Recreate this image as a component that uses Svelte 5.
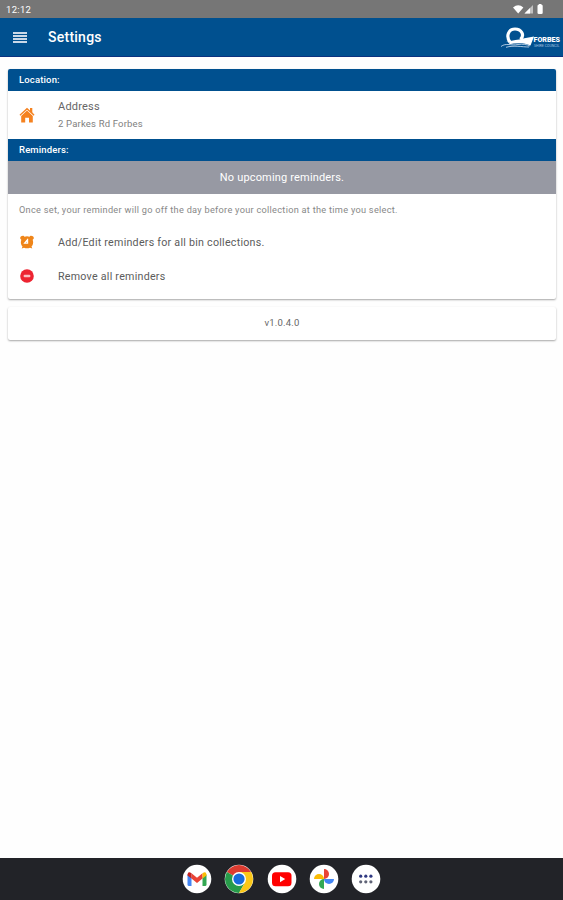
<script>
  const address = "2 Parkes Rd Forbes";
  const version = "v1.0.4.0";
  const apps = ["gmail", "chrome", "youtube", "photos", "drawer"];
</script>

<div class="screen">
  <div class="status-bar">
    <span class="clock">12:12</span>
    <svg class="status-icons" width="34" height="12" viewBox="0 0 34 12" aria-hidden="true">
      <path d="M0 4.6Q5.2 -0.2 10.4 4.6L5.2 10.5Z" fill="#fff" />
      <path d="M11.5 10.5L20 2V10.5Z" fill="#fff" opacity="0.55" />
      <path d="M11.5 10.5L17 5V10.5Z" fill="#fff" />
      <rect x="24.5" y="1.8" width="5.2" height="9.2" rx="1.3" fill="#fff" />
      <rect x="25.8" y="1" width="2.6" height="2" fill="#fff" />
    </svg>
  </div>

  <header class="app-bar">
    <button class="menu" type="button" aria-label="Menu">
      <span></span><span></span><span></span><span></span>
    </button>
    <h1>Settings</h1>
    <div class="logo">
      <svg width="63" height="30" viewBox="0 -3 63 30" aria-hidden="true">
        <path d="M10 17C5.5 11 8.7 4 15 4S25 10 20.5 14.5" fill="none" stroke="#fff" stroke-width="3.2" />
        <path d="M6 17C12 15 17 15.5 23 13.5L34 11.5L30.5 20.5C24 17.5 16 18 8 19.5C11 17.5 9 17 6 17Z" fill="#fff" />
        <path d="M1 21.5C6 17.5 11 21 18 19.5C23 18.8 27 19.5 30 21M6 22.3C14 20 22 22 29 22" fill="none" stroke="#d5e5f5" stroke-width="0.8" />
        <text x="33.5" y="16.5" class="logo-name" textLength="26.5" lengthAdjust="spacingAndGlyphs">FORBES</text>
        <text x="34" y="21.8" class="logo-sub" textLength="25.5" lengthAdjust="spacingAndGlyphs">SHIRE COUNCIL</text>
      </svg>
    </div>
  </header>

  <main>
    <section class="card">
      <h2>Location:</h2>
      <div class="row row-address">
        <svg width="16" height="16" viewBox="0 0 16 16" aria-hidden="true">
          <path d="M8 0.8L11 3.5V1H13.3V5.3L15.5 7.8L14.7 8.8L8 2.8L1.3 8.8L0.5 7.8Z" fill="#f58220" />
          <path d="M8 3.6L13.8 9V15.5H10V10.7H6.2V15.5H2.2V9Z" fill="#f58220" />
        </svg>
        <div class="address">
          <p class="label">Address</p>
          <p class="value">{address}</p>
        </div>
      </div>

      <h2>Reminders:</h2>
      <p class="banner">No upcoming reminders.</p>
      <p class="hint">Once set, your reminder will go off the day before your collection at the time you select.</p>
      <div class="row">
        <svg width="16" height="16" viewBox="0 0 16 16" aria-hidden="true">
          <path d="M1.2 4.5Q1 1.5 4.5 1.7L5.5 2.7Q8 1.7 10.5 2.7L11.5 1.7Q15 1.5 14.8 4.5L13.7 5.7Q15 10 12.5 12.5L13.3 14.6L11 13.7Q8 15 5 13.7L2.7 14.6L3.5 12.5Q1 10 2.3 5.7Z" fill="#ef8519" />
          <path d="M8.6 4.8V9.2H5.6L8.2 6" fill="none" stroke="#fff" stroke-width="1.2" />
        </svg>
        <p class="action action-add">Add/Edit reminders for all bin collections.</p>
      </div>
      <div class="row">
        <svg width="16" height="16" viewBox="0 0 16 16" aria-hidden="true">
          <circle cx="8" cy="8" r="6.8" fill="#ed2431" />
          <rect x="4.6" y="6.8" width="6.8" height="2.5" rx="1" fill="#fff" opacity="0.7" />
        </svg>
        <p class="action action-remove">Remove all reminders</p>
      </div>
    </section>

    <section class="card version">{version}</section>
  </main>

  <nav>
    {#each apps as app}
      <span class="app">
        <svg width="30" height="30" viewBox="0 0 30 30" aria-hidden="true">
          <circle cx="15" cy="15" r="14.3" fill="#fff" />
          {#if app === "gmail"}
            <path d="M5.5 10.5L9.5 13V22H7Q5.5 22 5.5 20.5Z" fill="#4285f4" />
            <path d="M24.5 10.5L20.5 13V22H23Q24.5 22 24.5 20.5Z" fill="#34a853" />
            <path d="M9.5 9.3L15 13.7L20.5 9.3V14.5L15 18.9L9.5 14.5Z" fill="#ea4335" />
            <path d="M5.5 10.5Q6 6.7 9.5 9.2V14.5L5.5 11.6Z" fill="#c5221f" />
            <path d="M24.5 10.5Q24 6.7 20.5 9.2V14.5L24.5 11.6Z" fill="#fbbc04" />
          {:else if app === "chrome"}
            <path d="M15 15L2.9 8A14 14 0 0 1 27.1 8Z" fill="#dc3b30" />
            <path d="M15 15L2.9 8A14 14 0 0 0 15 29L21 18.5Z" fill="#279b4a" />
            <path d="M15 8H27.1A14 14 0 0 1 15 29L21 18.5Z" fill="#fbc718" />
            <circle cx="15" cy="15" r="7" fill="#fff" />
            <circle cx="15" cy="15" r="5.6" fill="#176bdc" />
          {:else if app === "youtube"}
            <rect x="5" y="8.2" width="19.5" height="14" rx="3.5" fill="#f00" />
            <path d="M13 12L18.2 15.1L13 18.2Z" fill="#fff" />
          {:else if app === "photos"}
            <path d="M15 5A5 5 0 0 1 15 15Z" fill="#ea4335" />
            <path d="M25 15A5 5 0 0 1 15 15Z" fill="#4285f4" />
            <path d="M15 25A5 5 0 0 1 15 15Z" fill="#34a853" />
            <path d="M5 15A5 5 0 0 1 15 15Z" fill="#fbbc04" />
          {:else}
            {#each [9.7, 14.8, 19.9] as x}
              <circle cx={x} cy="12.2" r="1.6" fill="#303982" />
              <circle cx={x} cy="17.8" r="1.6" fill="#606477" />
            {/each}
          {/if}
        </svg>
      </span>
    {/each}
  </nav>
</div>

<style>
  :global(body) {
    margin: 0;
    background: #fefefe;
  }

  .screen {
    display: flex;
    flex-direction: column;
    height: 900px;
    font-family: Roboto, "Liberation Sans", sans-serif;
    color: #666;
    overflow: hidden;
  }

  h1,
  h2,
  p {
    margin: 0;
  }

  .status-bar {
    display: flex;
    align-items: center;
    justify-content: space-between;
    box-sizing: border-box;
    height: 18px;
    padding: 0 16px 0 6px;
    background: #767676;
    color: #fff;
  }

  .clock {
    font-size: 9.5px;
    letter-spacing: 0.3px;
  }

  .app-bar {
    display: flex;
    align-items: center;
    box-sizing: border-box;
    height: 39px;
    padding-left: 13px;
    background: #00508f;
    border-bottom: 1px solid #0b3280;
  }

  .menu {
    display: flex;
    flex-direction: column;
    gap: 1px;
    width: 14px;
    padding: 0;
    border: 0;
    background: none;
  }

  .menu span {
    height: 2px;
    background: #cad8e8;
  }

  h1 {
    margin-left: 21px;
    color: #fff;
    font-size: 14px;
    font-weight: 500;
    line-height: 18px;
    letter-spacing: 0.25px;
  }

  .logo {
    display: flex;
    margin-left: auto;
  }

  .logo svg {
    overflow: visible;
  }

  .logo-name {
    fill: #fff;
    font-size: 7px;
    font-weight: 900;
  }

  .logo-sub {
    fill: #a9c6e0;
    font-size: 4px;
  }

  main {
    flex: 1;
    padding: 12px 7px 0 8px;
  }

  .card {
    box-sizing: border-box;
    height: 230px;
    border-radius: 2px;
    background: #fff;
    box-shadow: 0 1px 2px rgba(0, 0, 0, 0.35);
    overflow: hidden;
  }

  h2 {
    box-sizing: border-box;
    height: 22px;
    padding-left: 11px;
    background: #00508f;
    color: #fff;
    font-size: 9.5px;
    font-weight: 500;
    line-height: 22px;
    letter-spacing: 0.15px;
  }

  .row {
    display: flex;
    align-items: center;
    gap: 23px;
    height: 34px;
    padding-left: 11px;
  }

  .row-address {
    height: 48px;
  }

  .address {
    padding-top: 2px;
  }

  .label {
    font-size: 11px;
    line-height: 16px;
    letter-spacing: 0.2px;
  }

  .value {
    color: #808080;
    font-size: 9.5px;
    line-height: 18px;
    letter-spacing: 0.18px;
  }

  .banner {
    height: 33px;
    background: #9799a3;
    color: #fff;
    font-size: 11px;
    line-height: 33px;
    text-align: center;
    letter-spacing: 0.17px;
  }

  .hint {
    height: 31px;
    padding-left: 11px;
    color: #888;
    font-size: 9.2px;
    line-height: 32px;
    letter-spacing: 0.28px;
    white-space: nowrap;
  }

  .action {
    color: #5c5c5c;
    font-size: 10.7px;
    letter-spacing: 0.24px;
  }

  .version {
    height: 33px;
    margin-top: 8px;
    font-size: 9.5px;
    line-height: 32px;
    text-align: center;
    letter-spacing: 0.2px;
  }

  nav {
    display: flex;
    align-items: center;
    justify-content: center;
    gap: 12.3px;
    height: 42px;
    background: #222328;
  }

  .app {
    display: flex;
  }
</style>
